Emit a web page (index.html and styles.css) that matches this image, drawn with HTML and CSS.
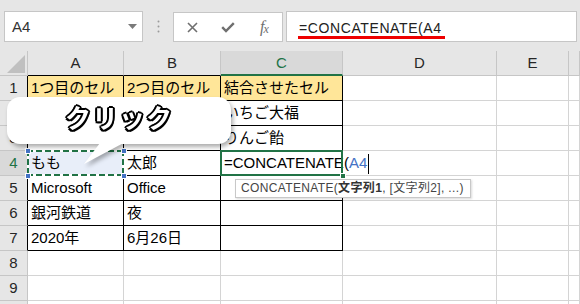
FILE: index.html
```html
<!DOCTYPE html>
<html lang="ja">
<head>
<meta charset="utf-8">
<link rel="stylesheet" href="styles.css">
</head>
<body>
<div class="app">
  <div class="toolbar">
    <div class="namebox">
      <span class="name">A4</span>
      <svg class="dd" width="9" height="5" viewBox="0 0 9 5"><path d="M0 0H9L4.5 5Z" fill="#7a7a7a"/></svg>
    </div>
    <div class="grip">
      <svg width="3" height="13" viewBox="0 0 3 13"><circle cx="1.5" cy="1.5" r="1" fill="#9a9a9a"/><circle cx="1.5" cy="6.5" r="1" fill="#9a9a9a"/><circle cx="1.5" cy="11.5" r="1" fill="#9a9a9a"/></svg>
    </div>
    <div class="fxbtns">
      <span class="btn"><svg width="11" height="11" viewBox="0 0 11 11"><path d="M1 1L10 10M10 1L1 10" stroke="#6f6f6f" stroke-width="1.6" fill="none"/></svg></span>
      <span class="btn"><svg width="14" height="11" viewBox="0 0 14 11"><path d="M1.2 5.2L5 9L12.8 1.2" stroke="#6f6f6f" stroke-width="2.4" fill="none"/></svg></span>
      <span class="btn"><span class="fx">f<span class="fx-x">x</span></span></span>
    </div>
    <div class="formula"><span class="ftext">=CONCATENATE(A4</span></div>
  </div>

  <div class="sheet">
    <div class="c corner"><svg width="28" height="25" viewBox="0 0 28 25"><path d="M7 22H25V4Z" fill="#c0c0c0"/></svg></div>
    <div class="c ch tb">A</div>
    <div class="c ch tb">B</div>
    <div class="c ch sel">C</div>
    <div class="c ch">D</div>
    <div class="c ch">E</div>
    <div class="c ch"></div>

    <div class="c rh tb">1</div>
    <div class="c t y">1つ目のセル</div>
    <div class="c t y">2つ目のセル</div>
    <div class="c t y">結合させたセル</div>
    <div class="c"></div><div class="c"></div><div class="c"></div>

    <div class="c rh tb">2</div>
    <div class="c t"></div>
    <div class="c t"></div>
    <div class="c t">いちご大福</div>
    <div class="c"></div><div class="c"></div><div class="c"></div>

    <div class="c rh tb">3</div>
    <div class="c t"></div>
    <div class="c t"></div>
    <div class="c t">りんご飴</div>
    <div class="c"></div><div class="c"></div><div class="c"></div>

    <div class="c rh tb sel">4</div>
    <div class="c t a4">もも<div class="ants"><span class="h tl"></span><span class="h tr"></span><span class="h bl"></span><span class="h br"></span></div></div>
    <div class="c t">太郎</div>
    <div class="c t edit">=CONCATENATE(<span class="ref">A4</span><span class="cursor"></span><div class="selbox"><span class="handle"></span></div></div>
    <div class="c"></div><div class="c"></div><div class="c"></div>

    <div class="c rh tb">5</div>
    <div class="c t">Microsoft</div>
    <div class="c t">Office</div>
    <div class="c t"></div>
    <div class="c"></div><div class="c"></div><div class="c"></div>

    <div class="c rh tb">6</div>
    <div class="c t">銀河鉄道</div>
    <div class="c t">夜</div>
    <div class="c t"></div>
    <div class="c"></div><div class="c"></div><div class="c"></div>

    <div class="c rh tb">7</div>
    <div class="c t">2020年</div>
    <div class="c t">6月26日</div>
    <div class="c t"></div>
    <div class="c"></div><div class="c"></div><div class="c"></div>

    <div class="c rh">8</div>
    <div class="c"></div><div class="c"></div><div class="c"></div><div class="c"></div><div class="c"></div><div class="c"></div>

    <div class="c rh">9</div>
    <div class="c"></div><div class="c"></div><div class="c"></div><div class="c"></div><div class="c"></div><div class="c"></div>

    <div class="c rh last"></div>
    <div class="c last"></div><div class="c last"></div><div class="c last"></div><div class="c last"></div><div class="c last"></div><div class="c last"></div>

    <div class="callout">
      <div class="bubble"><span class="click">クリック</span></div>
      <svg class="tail" width="224" height="70" viewBox="0 0 224 70"><path d="M96 42H124L77 67Z" fill="#fff"/></svg>
    </div>

    <div class="tip">CONCATENATE(<b>文字列1</b>, [文字列2], ...)</div>
  </div>
</div>
</body>
</html>
```

FILE: styles.css
```css
* { box-sizing: border-box; }
html, body { margin: 0; padding: 0; }
body {
  width: 580px;
  height: 304px;
  overflow: hidden;
  background: #fff;
  font-family: "Liberation Sans", "Noto Sans CJK JP", sans-serif;
}
.app { height: 304px; overflow: hidden; }

/* ---------- toolbar ---------- */
.toolbar {
  height: 51px;
  background: #e6e6e6;
  display: flex;
  align-items: flex-start;
  padding: 11px 0 0 4px;
}
.namebox {
  width: 139px;
  height: 31px;
  background: #fff;
  border: 1px solid #c6c6c6;
  display: flex;
  align-items: center;
  justify-content: space-between;
  padding: 0 5px 0 7px;
}
.name { font-size: 15px; color: #333; }
.grip {
  width: 30px;
  height: 31px;
  display: flex;
  align-items: center;
  justify-content: center;
}
.fxbtns {
  width: 110px;
  height: 30px;
  margin-top: 1px;
  background: #fff;
  border: 1px solid #c6c6c6;
  display: flex;
}
.btn {
  width: 36px;
  height: 28px;
  display: flex;
  align-items: center;
  justify-content: center;
}
.fx {
  font-family: "Liberation Serif", serif;
  font-style: italic;
  font-size: 16px;
  color: #6f6f6f;
  letter-spacing: -1px;
}
.fx-x { font-size: 12px; position: relative; top: 1px; }
.formula {
  margin-left: 3px;
  width: 291px;
  height: 31px;
  background: #fff;
  border: 1px solid #c6c6c6;
  padding: 7px 0 0 11px;
}
.ftext {
  display: inline-block;
  font-size: 14px;
  letter-spacing: 0.6px;
  line-height: 16px;
  color: #222;
  padding: 0 3px 0 1px;
  border-bottom: 3px solid #ee0000;
}

/* ---------- sheet ---------- */
.sheet {
  position: relative;
  display: grid;
  grid-template-columns: 28px 96px 97px 122px 154px 72px 11px;
  grid-template-rows: repeat(10, 25px) 3px;
}
.c {
  border-right: 1px solid #d4d4d4;
  border-bottom: 1px solid #d4d4d4;
  font-size: 15px;
  line-height: 24px;
  padding-left: 3px;
  white-space: nowrap;
  color: #000;
}
.c.last { border-bottom: 0; }
.corner {
  background: #e6e6e6;
  border-color: #c6c6c6;
  padding: 0;
}
.corner svg { display: block; }
.ch {
  background: #e6e6e6;
  border-color: #c6c6c6;
  text-align: center;
  padding: 0;
  color: #262626;
}
.ch.tb { border-bottom-color: #000; }
.ch.sel {
  background: #d9d9d9;
  color: #217346;
  border-bottom: 2px solid #217346;
  line-height: 23px;
}
.rh {
  background: #e6e6e6;
  border-color: #c6c6c6;
  text-align: center;
  padding: 0;
  color: #262626;
}
.rh.tb { border-right-color: #000; }
.rh.sel { background: #d9d9d9; color: #217346; }
.t { border-color: #000; }
.y { background: #ffe699; }

.a4 { position: relative; background: #e8eef9; }
.ants {
  position: absolute;
  left: -1px; top: -1px; right: -1px; bottom: -1px;
  background:
    repeating-linear-gradient(90deg, #217346 0 6px, #fff 6px 9px) left top / 100% 2px no-repeat,
    repeating-linear-gradient(90deg, #217346 0 6px, #fff 6px 9px) left bottom / 100% 2px no-repeat,
    repeating-linear-gradient(180deg, #217346 0 6px, #fff 6px 9px) left top / 2px 100% no-repeat,
    repeating-linear-gradient(180deg, #217346 0 6px, #fff 6px 9px) right top / 2px 100% no-repeat;
}
.h {
  position: absolute;
  width: 6px; height: 6px;
  background: #4472c4;
  border: 1px solid #fff;
}
.h.tl { left: -2px; top: -2px; }
.h.tr { right: -3px; top: -2px; }
.h.bl { left: -2px; bottom: -3px; }
.h.br { right: -3px; bottom: -3px; }

.edit { position: relative; overflow: visible; }
.ref { color: #4472c4; }
.cursor {
  display: inline-block;
  width: 1px;
  height: 20px;
  background: #000;
  vertical-align: middle;
  margin-left: 1px;
}
.selbox {
  position: absolute;
  left: -1px; top: -1px; right: -1px; bottom: -1px;
  border: 2px solid #217346;
}
.handle {
  position: absolute;
  right: -5px; bottom: -5px;
  width: 6px; height: 6px;
  background: #217346;
  border: 1px solid #fff;
}

/* ---------- callout ---------- */
.callout {
  position: absolute;
  left: 7px;
  top: 46px;
  width: 224px;
  height: 70px;
  filter: drop-shadow(2px 3px 2px rgba(0, 0, 0, 0.32));
}
.bubble {
  height: 47px;
  background: #fff;
  border-radius: 13px;
  display: flex;
  align-items: center;
  justify-content: center;
  padding-bottom: 8px;
}
.click {
  font-family: "Noto Sans CJK JP", sans-serif;
  font-weight: 700;
  font-size: 26px;
  line-height: 30px;
  letter-spacing: 1px;
  color: #fff;
  text-shadow:
    2px 0 0 #000, -2px 0 0 #000, 0 2px 0 #000, 0 -2px 0 #000,
    1.5px 1.5px 0 #000, -1.5px 1.5px 0 #000, 1.5px -1.5px 0 #000, -1.5px -1.5px 0 #000;
}
.tail { position: absolute; left: 0; top: 0; }

/* ---------- tooltip ---------- */
.tip {
  position: absolute;
  left: 235px;
  top: 128px;
  height: 19px;
  padding: 0 6px 0 5px;
  border: 1px solid #c8c8c8;
  background: #fff;
  box-shadow: 1px 1px 2px rgba(0, 0, 0, 0.15);
  font-size: 12px;
  line-height: 17px;
  letter-spacing: 0.35px;
  color: #444;
  white-space: nowrap;
}
.tip b { color: #333; }
```
